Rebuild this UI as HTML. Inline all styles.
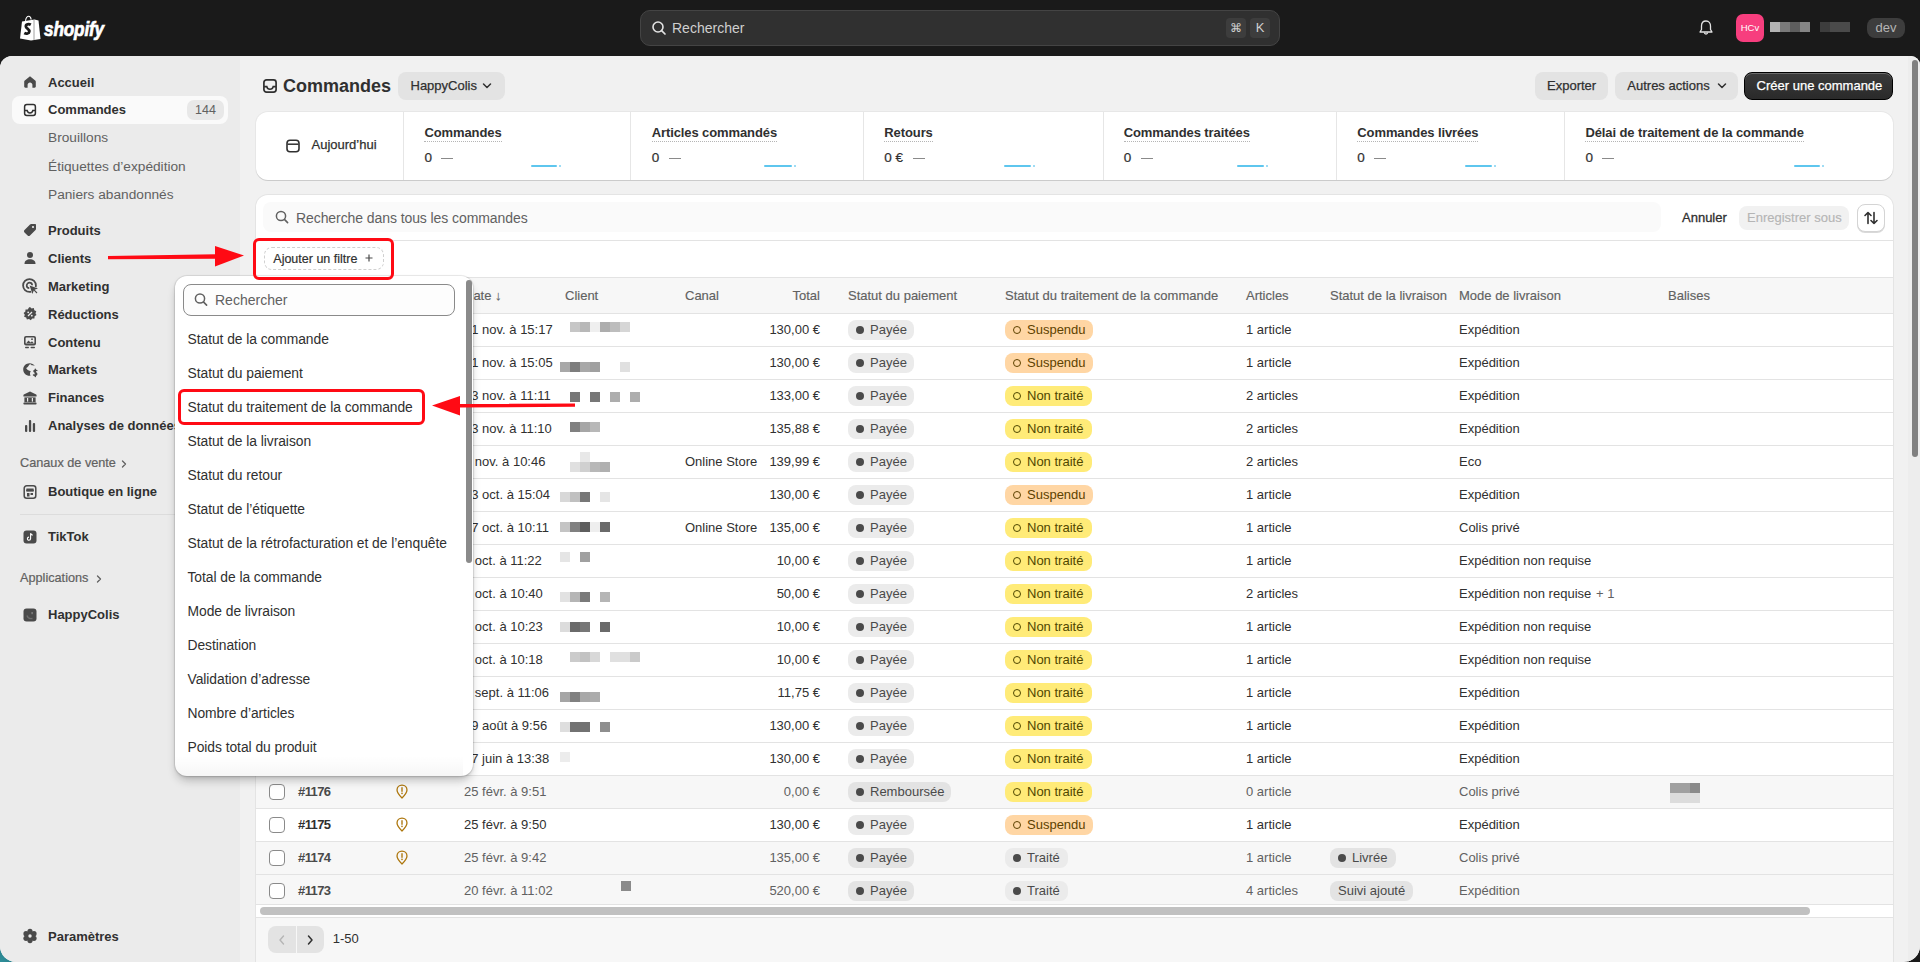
<!DOCTYPE html>
<html><head><meta charset="utf-8">
<style>
*{box-sizing:border-box;margin:0;padding:0}
html,body{width:1920px;height:962px;overflow:hidden;background:#1a1a1a;font-family:"Liberation Sans",sans-serif;color:#303030}
.abs{position:absolute}
#top{position:absolute;left:0;top:0;width:1920px;height:56px;background:#1a1a1a}
#frame{position:absolute;left:0;top:56px;width:1920px;height:906px;background:#f1f1f1;border-radius:12px 9px 16px 16px;overflow:hidden}
#teal{position:absolute;left:0;top:900px;width:60px;height:62px;background:radial-gradient(circle at 0 100%,#2f8f9a 0,#1f6b76 40%,#1a1a1a 100%)}
#side{position:absolute;left:0;top:0;width:240px;height:906px;background:#ebebeb}
.nav{position:absolute;left:48px;font-size:13px;font-weight:bold;color:#303030;white-space:nowrap;line-height:16px}
.sub{position:absolute;left:48px;font-size:13.7px;color:#616161;white-space:nowrap;line-height:16px}
.sec{position:absolute;left:20px;font-size:12.7px;color:#616161;white-space:nowrap;line-height:16px;-webkit-text-stroke:0.2px #616161}
.t{position:absolute;white-space:nowrap;line-height:20px}
.ico{position:absolute;left:22px;width:16px;height:16px}
</style></head><body>
<div id="top">
  <!-- logo -->
  <svg class="abs" style="left:19px;top:15px" width="23" height="26" viewBox="0 0 23 26">
    <path d="M3 6.5 L15.5 4.5 L19.5 5.5 L21.5 24 L12 25.5 L1 23.5 Z" fill="#fff"/>
    <path d="M6.5 5.8 C7 2.8 8.4 1.3 9.8 1.3 C11 1.3 11.8 2.4 12.2 4.6" stroke="#fff" stroke-width="1.1" fill="none"/>
    <line x1="15" y1="5" x2="15" y2="25" stroke="#888" stroke-width="0.8"/>
    <path d="M11.8 9.8 C9.8 8.6 6.6 9 6.9 11.6 C7.1 13.6 10.6 14 10.3 16.6 C10.1 18.6 7.4 19.2 5.3 18" stroke="#1a1a1a" stroke-width="2.8" fill="none"/>
  </svg>
  <div class="abs" style="left:44px;top:17.5px;font-size:20px;font-weight:bold;font-style:italic;color:#fff;transform:scaleX(0.86);transform-origin:0 0;letter-spacing:-0.2px;-webkit-text-stroke:0.7px #fff">shopify</div>
  <!-- search -->
  <div class="abs" style="left:640px;top:10px;width:640px;height:36px;background:#303030;border:1px solid #444;border-radius:10px"></div>
  <svg class="abs" style="left:651px;top:20px" width="16" height="16" viewBox="0 0 16 16"><circle cx="7" cy="7" r="5" stroke="#e3e3e3" stroke-width="1.6" fill="none"/><line x1="10.6" y1="10.6" x2="14" y2="14" stroke="#e3e3e3" stroke-width="1.7" stroke-linecap="round"/></svg>
  <div class="abs" style="left:672px;top:20px;font-size:14px;color:#cfcfcf;line-height:16px">Rechercher</div>
  <div class="abs" style="left:1226px;top:18px;width:20px;height:20px;background:#3d3d3d;border-radius:4px;color:#cfcfcf;font-size:12px;text-align:center;line-height:20px">&#8984;</div>
  <div class="abs" style="left:1250px;top:18px;width:20px;height:20px;background:#3d3d3d;border-radius:4px;color:#cfcfcf;font-size:13px;text-align:center;line-height:20px">K</div>
  <!-- right -->
  <svg class="abs" style="left:1698px;top:19px" width="16" height="18" viewBox="0 0 16 18"><path d="M8 2 C4.8 2 3.5 4.5 3.5 7 L3.5 10.5 L2 13 L14 13 L12.5 10.5 L12.5 7 C12.5 4.5 11.2 2 8 2 Z" stroke="#e3e3e3" stroke-width="1.3" fill="none" stroke-linejoin="round"/><path d="M6.3 13.5 C6.5 15.5 9.5 15.5 9.7 13.5" stroke="#e3e3e3" stroke-width="1.3" fill="none"/></svg>
  <div class="abs" style="left:1736px;top:14px;width:28px;height:28px;background:#f73e7e;border-radius:7px;color:#fff;font-size:9.5px;text-align:center;line-height:28px">HCv</div>
  <div class="abs" style="left:1770px;top:22px;width:10px;height:10px;background:#b3b3b3"></div>
  <div class="abs" style="left:1780px;top:22px;width:10px;height:10px;background:#7a7a7a"></div>
  <div class="abs" style="left:1790px;top:22px;width:10px;height:10px;background:#5e5e5e"></div>
  <div class="abs" style="left:1800px;top:22px;width:10px;height:10px;background:#858585"></div>
  <div class="abs" style="left:1820px;top:22px;width:10px;height:10px;background:#3d3d3d"></div>
  <div class="abs" style="left:1830px;top:22px;width:20px;height:10px;background:#4a4a4a"></div>
  <div class="abs" style="left:1867px;top:18px;width:38px;height:20px;background:#3d3d3d;border-radius:8px;color:#b5b5b5;font-size:13px;text-align:center;line-height:20px">dev</div>
</div>

<div id="teal"></div>
<div id="frame">
  <div id="side">
  </div>
  <div style="position:absolute;left:1908px;top:0;width:12px;height:906px;background:#ededed"></div>
  <!-- MAIN -->
</div>
<div id="content">
  <div class="abs" style="left:12px;top:96px;width:216px;height:28px;background:#fafafa;border-radius:8px"></div>
  <div class="abs" style="left:187px;top:100px;width:37px;height:20px;background:#e8e8e8;border-radius:7px;font-size:12.5px;color:#616161;text-align:center;line-height:20px">144</div>
  <div class="nav" style="top:75px">Accueil</div>
  <div class="nav" style="top:102px">Commandes</div>
  <div class="sub" style="top:130px">Brouillons</div>
  <div class="sub" style="top:158.5px">Étiquettes d’expédition</div>
  <div class="sub" style="top:186.5px">Paniers abandonnés</div>
  <div class="nav" style="top:222.5px">Produits</div>
  <div class="nav" style="top:250.5px">Clients</div>
  <div class="nav" style="top:278.7px">Marketing</div>
  <div class="nav" style="top:306.7px">Réductions</div>
  <div class="nav" style="top:334.5px">Contenu</div>
  <div class="nav" style="top:362.2px">Markets</div>
  <div class="nav" style="top:390.3px">Finances</div>
  <div class="nav" style="top:418.3px">Analyses de données</div>
  <div class="sec" style="top:455.3px">Canaux de vente</div>
  <svg class="abs" style="left:120px;top:458.5px" width="8" height="10" viewBox="0 0 8 10"><path d="M2.5 2 L5.5 5 L2.5 8" stroke="#616161" stroke-width="1.3" fill="none" stroke-linecap="round" stroke-linejoin="round"/></svg>
  <div class="nav" style="top:484.3px">Boutique en ligne</div>
  <div class="abs" style="left:20px;top:514px;width:200px;height:1px;background:#dcdcdc"></div>
  <div class="nav" style="top:529.2px">TikTok</div>
  <div class="sec" style="top:570.4px">Applications</div>
  <svg class="abs" style="left:95px;top:573.5px" width="8" height="10" viewBox="0 0 8 10"><path d="M2.5 2 L5.5 5 L2.5 8" stroke="#616161" stroke-width="1.3" fill="none" stroke-linecap="round" stroke-linejoin="round"/></svg>
  <div class="nav" style="top:607.3px">HappyColis</div>
  <div class="nav" style="top:928.8px">Paramètres</div>

  <svg class="abs" style="left:22px;top:74px" width="16" height="16" viewBox="0 0 16 16"><path d="M8 2.2 L2.8 6.6 C2.3 7 2.2 7.3 2.2 8 L2.2 12.6 C2.2 13.3 2.7 13.8 3.4 13.8 L5.6 13.8 L5.6 10.8 C5.6 9.5 6.7 8.5 8 8.5 C9.3 8.5 10.4 9.5 10.4 10.8 L10.4 13.8 L12.6 13.8 C13.3 13.8 13.8 13.3 13.8 12.6 L13.8 8 C13.8 7.3 13.7 7 13.2 6.6 Z" fill="#4a4a4a"/></svg>
  <svg class="abs" style="left:22px;top:102px" width="16" height="16" viewBox="0 0 16 16"><rect x="2.6" y="2.6" width="10.8" height="10.8" rx="2.2" stroke="#303030" stroke-width="1.5" fill="none"/><path d="M2.8 8.6 L5.2 8.6 C5.6 10.2 6.6 11 8 11 C9.4 11 10.4 10.2 10.8 8.6 L13.2 8.6" stroke="#303030" stroke-width="1.5" fill="none"/></svg>
  <svg class="abs" style="left:22px;top:222px" width="16" height="16" viewBox="0 0 16 16"><path d="M9.2 2 L13 2 C13.6 2 14 2.4 14 3 L14 6.8 C14 7.3 13.8 7.7 13.5 8 L8 13.5 C7.3 14.2 6.3 14.2 5.6 13.5 L2.5 10.4 C1.8 9.7 1.8 8.7 2.5 8 L8 2.5 C8.3 2.2 8.7 2 9.2 2 Z" fill="#4a4a4a"/><circle cx="11" cy="5" r="1.1" fill="#ebebeb"/></svg>
  <svg class="abs" style="left:22px;top:250px" width="16" height="16" viewBox="0 0 16 16"><circle cx="8" cy="5" r="3" fill="#4a4a4a"/><path d="M2.5 14 C2.5 10.8 4.8 9.3 8 9.3 C11.2 9.3 13.5 10.8 13.5 14 Z" fill="#4a4a4a"/></svg>
  <svg class="abs" style="left:22px;top:278px" width="17" height="17" viewBox="0 0 17 17"><path d="M13.6 9.2 C13.8 8.7 13.9 8.1 13.9 7.5 C13.9 4 11 1.1 7.5 1.1 C4 1.1 1.1 4 1.1 7.5 C1.1 11 4 13.9 7.5 13.9 C8.1 13.9 8.7 13.8 9.2 13.6" stroke="#4a4a4a" stroke-width="1.8" fill="none"/><path d="M10.2 7.3 C10.1 5.8 8.9 4.7 7.5 4.7 C6 4.7 4.7 6 4.7 7.5 C4.7 8.9 5.8 10.1 7.3 10.2" stroke="#4a4a4a" stroke-width="1.7" fill="none"/><path d="M7.6 7.6 L16 10.4 L12.6 11.8 L15.4 14.6 L14.6 15.4 L11.8 12.6 L10.4 16 Z" fill="#4a4a4a"/></svg>
  <svg class="abs" style="left:22px;top:306px" width="16" height="16" viewBox="0 0 16 16"><path d="M8 1 L9.6 2.4 L11.8 2.1 L12.3 4.2 L14.3 5.2 L13.5 7.2 L14.5 9.1 L12.6 10.3 L12.4 12.5 L10.2 12.4 L8.8 14.2 L7 12.9 L4.9 13.6 L4.2 11.5 L2.1 10.8 L2.8 8.7 L1.6 6.9 L3.4 5.6 L3.5 3.4 L5.7 3.4 L7 1.6 Z" fill="#4a4a4a"/><path d="M6 10 L10 6" stroke="#ebebeb" stroke-width="1.3"/><circle cx="6.2" cy="6.3" r="0.9" fill="#ebebeb"/><circle cx="9.8" cy="9.7" r="0.9" fill="#ebebeb"/></svg>
  <svg class="abs" style="left:22px;top:334px" width="16" height="16" viewBox="0 0 16 16"><rect x="2" y="2" width="12" height="9.5" rx="2" fill="#4a4a4a"/><rect x="3.6" y="3.6" width="8.8" height="6.2" rx="0.8" fill="#ebebeb"/><path d="M4 9.5 L6.5 6.5 L8.5 8.5 L10 7.2 L12 9.5 Z" fill="#4a4a4a"/><circle cx="10" cy="5.2" r="0.9" fill="#4a4a4a"/><rect x="3" y="12.8" width="4" height="1.4" rx="0.7" fill="#4a4a4a"/><rect x="8.5" y="12.8" width="4.5" height="1.4" rx="0.7" fill="#4a4a4a"/></svg>
  <svg class="abs" style="left:22px;top:362px" width="17" height="17" viewBox="0 0 17 17"><path d="M7.5 1.2 C4 1.2 1.2 4 1.2 7.5 C1.2 11 4 13.8 7.5 13.8 C7.9 13.8 8.3 13.8 8.6 13.7 C8.2 13 8 12.3 8 11.5 C8 10.6 8.3 9.8 8.8 9.2 L6.8 8.6 C5.6 8.2 4.6 7.3 4.2 6.1 C5.4 5.3 6.6 4.2 7.2 2.8 C7.4 2.2 8.4 2 9 2.5 L9.6 3.3 C10.7 3.1 11.8 3.2 12.8 3.8 C11.6 2.2 9.7 1.2 7.5 1.2 Z" fill="#4a4a4a"/><path d="M14.8 8.6 C14.2 8 12.2 7.8 11.9 9 C11.6 10.4 14.8 10.3 14.8 12.1 C14.8 13.6 12.6 13.8 11.5 12.9 M13.3 7.2 L13.3 14.6" stroke="#4a4a4a" stroke-width="1.4" fill="none" stroke-linecap="round"/></svg>
  <svg class="abs" style="left:22px;top:390px" width="16" height="16" viewBox="0 0 16 16"><path d="M8 1.5 L14.2 4.6 C14.6 4.8 14.6 5.4 14.6 5.8 L14.6 6.6 L1.4 6.6 L1.4 5.8 C1.4 5.4 1.4 4.8 1.8 4.6 Z" fill="#4a4a4a"/><rect x="2.4" y="7.4" width="11.2" height="4.8" fill="#4a4a4a"/><rect x="5" y="8" width="1.2" height="3.6" fill="#ebebeb"/><rect x="9.8" y="8" width="1.2" height="3.6" fill="#ebebeb"/><rect x="1.4" y="12.6" width="13.2" height="2" rx="0.8" fill="#4a4a4a"/></svg>
  <svg class="abs" style="left:22px;top:418px" width="16" height="16" viewBox="0 0 16 16"><rect x="3" y="7" width="2.3" height="7" rx="1" fill="#4a4a4a"/><rect x="6.9" y="2" width="2.3" height="12" rx="1" fill="#4a4a4a"/><rect x="10.8" y="5" width="2.3" height="9" rx="1" fill="#4a4a4a"/></svg>
  <svg class="abs" style="left:22px;top:484px" width="16" height="16" viewBox="0 0 16 16"><rect x="2.2" y="1.8" width="11.6" height="12.4" rx="2.5" stroke="#4a4a4a" stroke-width="1.5" fill="none"/><path d="M4.5 4.5 L11.5 4.5 L12 7 C11.5 8 10.5 8 10 7.2 C9.5 8 8.5 8 8 7.2 C7.5 8 6.5 8 6 7.2 C5.5 8 4.5 8 4 7 Z" fill="#4a4a4a"/><rect x="5" y="9" width="2.5" height="3.5" fill="#4a4a4a"/><rect x="8.5" y="9" width="2.5" height="2" fill="#4a4a4a"/></svg>
  <svg class="abs" style="left:22px;top:529px" width="16" height="16" viewBox="0 0 16 16"><rect x="1.5" y="1.5" width="13" height="13" rx="3" fill="#4a4a4a"/><path d="M8.6 4.2 L8.6 9.6 C8.6 10.6 7.9 11.3 7 11.3 C6.1 11.3 5.4 10.6 5.4 9.7 C5.4 8.8 6.1 8.1 7 8.1 M8.6 4.2 C8.8 5.3 9.6 6 10.7 6.1" stroke="#fff" stroke-width="1.1" fill="none"/></svg>
  <svg class="abs" style="left:22px;top:607px" width="16" height="16" viewBox="0 0 16 16"><rect x="1.5" y="1.5" width="13" height="13" rx="3" fill="#4a4a4a"/><path d="M5 8.5 C5.5 11 8 12 10.5 11.5" stroke="#6e6e6e" stroke-width="1.3" fill="none"/><rect x="9.5" y="5" width="1.2" height="2.2" fill="#8a8a8a"/></svg>
  <svg class="abs" style="left:22px;top:928px" width="16" height="16" viewBox="0 0 16 16"><circle cx="8" cy="8" r="4.8" fill="#4a4a4a"/><circle cx="8.00" cy="3.40" r="2.6" fill="#4a4a4a"/><circle cx="11.98" cy="5.70" r="2.6" fill="#4a4a4a"/><circle cx="11.98" cy="10.30" r="2.6" fill="#4a4a4a"/><circle cx="8.00" cy="12.60" r="2.6" fill="#4a4a4a"/><circle cx="4.02" cy="10.30" r="2.6" fill="#4a4a4a"/><circle cx="4.02" cy="5.70" r="2.6" fill="#4a4a4a"/><circle cx="8" cy="8" r="1.7" fill="#ebebeb"/></svg>

<!-- CONTENT -->
<svg class="abs" style="left:263px;top:79px" width="14" height="14" viewBox="0 0 14 14"><rect x="0.9" y="0.9" width="12.2" height="12.2" rx="2.6" stroke="#303030" stroke-width="1.7" fill="none"/><path d="M1 7.6 L3.8 7.6 C4.2 9.4 5.4 10.3 7 10.3 C8.6 10.3 9.8 9.4 10.2 7.6 L13 7.6" stroke="#303030" stroke-width="1.6" fill="none"/></svg>
<div class="t" style="left:283px;top:76.16px;font-size:18px;color:#303030;font-weight:bold;">Commandes</div>
<div class="abs" style="left:398px;top:72px;width:107px;height:28px;background:#e3e3e3;border-radius:8px"></div>
<div class="t" style="left:410.5px;top:75.50px;font-size:13px;color:#303030;font-weight:normal;-webkit-text-stroke:0.25px #303030;">HappyColis</div>
<svg class="abs" style="left:482px;top:82px" width="10" height="8" viewBox="0 0 10 8"><path d="M1.5 2 L5 5.5 L8.5 2" stroke="#303030" stroke-width="1.5" fill="none" stroke-linecap="round" stroke-linejoin="round"/></svg>
<div class="abs" style="left:1535px;top:72px;width:73px;height:28px;background:#e3e3e3;border-radius:8px"></div>
<div class="t" style="left:1547px;top:75.50px;font-size:13px;color:#303030;font-weight:normal;-webkit-text-stroke:0.25px #303030;">Exporter</div>
<div class="abs" style="left:1615px;top:72px;width:123px;height:28px;background:#e3e3e3;border-radius:8px"></div>
<div class="t" style="left:1627.3px;top:75.50px;font-size:13px;color:#303030;font-weight:normal;-webkit-text-stroke:0.25px #303030;">Autres actions</div>
<svg class="abs" style="left:1717px;top:82px" width="10" height="8" viewBox="0 0 10 8"><path d="M1.5 2 L5 5.5 L8.5 2" stroke="#303030" stroke-width="1.5" fill="none" stroke-linecap="round" stroke-linejoin="round"/></svg>
<div class="abs" style="left:1744px;top:72px;width:149px;height:28px;background:linear-gradient(#3a3a3a,#2a2a2a);border:1px solid #000;border-radius:8px;box-shadow:inset 0 1px 0 rgba(255,255,255,0.25)"></div>
<div class="t" style="left:1756.6px;top:75.50px;font-size:13px;color:#ffffff;font-weight:normal;-webkit-text-stroke:0.25px #ffffff;">Créer une commande</div>
<div class="abs" style="left:256px;top:112px;width:1637px;height:68px;background:#fff;border-radius:12px;box-shadow:0 1px 0 rgba(0,0,0,0.12),0 0 0 1px rgba(0,0,0,0.04)"></div>
<div class="abs" style="left:403px;top:112px;width:1px;height:68px;background:#e6e6e6"></div>
<div class="abs" style="left:630px;top:112px;width:1px;height:68px;background:#e6e6e6"></div>
<div class="abs" style="left:863px;top:112px;width:1px;height:68px;background:#e6e6e6"></div>
<div class="abs" style="left:1103px;top:112px;width:1px;height:68px;background:#e6e6e6"></div>
<div class="abs" style="left:1336px;top:112px;width:1px;height:68px;background:#e6e6e6"></div>
<div class="abs" style="left:1564px;top:112px;width:1px;height:68px;background:#e6e6e6"></div>
<svg class="abs" style="left:286px;top:139px" width="14" height="14" viewBox="0 0 14 14"><rect x="1" y="1.2" width="12" height="11.6" rx="3" stroke="#303030" stroke-width="1.6" fill="none"/><line x1="1.5" y1="5.2" x2="12.5" y2="5.2" stroke="#303030" stroke-width="1.5"/></svg>
<div class="t" style="left:311.5px;top:135.30px;font-size:13px;color:#303030;font-weight:normal;-webkit-text-stroke:0.25px #303030;">Aujourd’hui</div>
<div class="t" style="left:424.4px;top:123.20px;font-size:13px;color:#303030;font-weight:bold;letter-spacing:-0.1px"><span style="border-bottom:1.5px dotted #b5b5b5;padding-bottom:1px">Commandes</span></div>
<div class="t" style="left:424.4px;top:148.02px;font-size:13.5px;color:#303030;font-weight:normal;-webkit-text-stroke:0.2px #303030;">0</div>
<div class="abs" style="left:441.4px;top:157.5px;width:12px;height:1.6px;background:#8a8a8a"></div>
<div class="abs" style="left:531px;top:164.8px;width:26px;height:2px;background:#5ec6ee;border-radius:1px"></div>
<div class="abs" style="left:559px;top:164.8px;width:1.5px;height:2px;background:#9fdcf4"></div>
<div class="t" style="left:651.7px;top:123.20px;font-size:13px;color:#303030;font-weight:bold;letter-spacing:-0.1px"><span style="border-bottom:1.5px dotted #b5b5b5;padding-bottom:1px">Articles commandés</span></div>
<div class="t" style="left:651.7px;top:148.02px;font-size:13.5px;color:#303030;font-weight:normal;-webkit-text-stroke:0.2px #303030;">0</div>
<div class="abs" style="left:668.7px;top:157.5px;width:12px;height:1.6px;background:#8a8a8a"></div>
<div class="abs" style="left:764px;top:164.8px;width:28px;height:2px;background:#5ec6ee;border-radius:1px"></div>
<div class="abs" style="left:794px;top:164.8px;width:1.5px;height:2px;background:#9fdcf4"></div>
<div class="t" style="left:884.3px;top:123.20px;font-size:13px;color:#303030;font-weight:bold;letter-spacing:-0.1px"><span style="border-bottom:1.5px dotted #b5b5b5;padding-bottom:1px">Retours</span></div>
<div class="t" style="left:884.3px;top:148.02px;font-size:13.5px;color:#303030;font-weight:normal;-webkit-text-stroke:0.2px #303030;">0 €</div>
<div class="abs" style="left:913.3px;top:157.5px;width:12px;height:1.6px;background:#8a8a8a"></div>
<div class="abs" style="left:1004px;top:164.8px;width:27px;height:2px;background:#5ec6ee;border-radius:1px"></div>
<div class="abs" style="left:1033px;top:164.8px;width:1.5px;height:2px;background:#9fdcf4"></div>
<div class="t" style="left:1123.7px;top:123.20px;font-size:13px;color:#303030;font-weight:bold;letter-spacing:-0.1px"><span style="border-bottom:1.5px dotted #b5b5b5;padding-bottom:1px">Commandes traitées</span></div>
<div class="t" style="left:1123.7px;top:148.02px;font-size:13.5px;color:#303030;font-weight:normal;-webkit-text-stroke:0.2px #303030;">0</div>
<div class="abs" style="left:1140.7px;top:157.5px;width:12px;height:1.6px;background:#8a8a8a"></div>
<div class="abs" style="left:1237px;top:164.8px;width:27px;height:2px;background:#5ec6ee;border-radius:1px"></div>
<div class="abs" style="left:1266px;top:164.8px;width:1.5px;height:2px;background:#9fdcf4"></div>
<div class="t" style="left:1357.3px;top:123.20px;font-size:13px;color:#303030;font-weight:bold;letter-spacing:-0.1px"><span style="border-bottom:1.5px dotted #b5b5b5;padding-bottom:1px">Commandes livrées</span></div>
<div class="t" style="left:1357.3px;top:148.02px;font-size:13.5px;color:#303030;font-weight:normal;-webkit-text-stroke:0.2px #303030;">0</div>
<div class="abs" style="left:1374.3px;top:157.5px;width:12px;height:1.6px;background:#8a8a8a"></div>
<div class="abs" style="left:1465px;top:164.8px;width:27px;height:2px;background:#5ec6ee;border-radius:1px"></div>
<div class="abs" style="left:1494px;top:164.8px;width:1.5px;height:2px;background:#9fdcf4"></div>
<div class="t" style="left:1585.4px;top:123.20px;font-size:13px;color:#303030;font-weight:bold;letter-spacing:-0.1px"><span style="border-bottom:1.5px dotted #b5b5b5;padding-bottom:1px">Délai de traitement de la commande</span></div>
<div class="t" style="left:1585.4px;top:148.02px;font-size:13.5px;color:#303030;font-weight:normal;-webkit-text-stroke:0.2px #303030;">0</div>
<div class="abs" style="left:1602.4px;top:157.5px;width:12px;height:1.6px;background:#8a8a8a"></div>
<div class="abs" style="left:1794px;top:164.8px;width:26px;height:2px;background:#5ec6ee;border-radius:1px"></div>
<div class="abs" style="left:1822px;top:164.8px;width:1.5px;height:2px;background:#9fdcf4"></div>
<div class="abs" style="left:256px;top:195px;width:1637px;height:723px;background:#fff;border-radius:12px 12px 0 0;box-shadow:0 0 0 1px rgba(0,0,0,0.05)"></div>
<div class="abs" style="left:255px;top:918px;width:1639px;height:44px;background:#f7f7f7;border-left:1px solid #e3e3e3;border-right:1px solid #e3e3e3"></div>
<div class="abs" style="left:263px;top:202px;width:1398px;height:30px;background:#fafafa;border-radius:8px"></div>
<svg class="abs" style="left:275px;top:210px" width="14" height="14" viewBox="0 0 14 14"><circle cx="6" cy="6" r="4.6" stroke="#616161" stroke-width="1.5" fill="none"/><line x1="9.4" y1="9.4" x2="12.6" y2="12.6" stroke="#616161" stroke-width="1.6" stroke-linecap="round"/></svg>
<div class="t" style="left:296px;top:208.45px;font-size:14px;color:#616161;font-weight:normal;letter-spacing:-0.08px">Recherche dans tous les commandes</div>
<div class="t" style="left:1682px;top:208.30px;font-size:13px;color:#303030;font-weight:normal;-webkit-text-stroke:0.3px #303030;">Annuler</div>
<div class="abs" style="left:1739px;top:206px;width:110px;height:24px;background:#f1f1f1;border-radius:8px"></div>
<div class="t" style="left:1747px;top:208.30px;font-size:13px;color:#b5b5b5;font-weight:normal;-webkit-text-stroke:0.15px #b5b5b5;">Enregistrer sous</div>
<div class="abs" style="left:1857px;top:204px;width:28px;height:28px;background:#fff;border:1px solid #d4d4d4;border-radius:8px;box-shadow:0 1px 0 rgba(0,0,0,0.15)"></div>
<svg class="abs" style="left:1863px;top:210px" width="16" height="16" viewBox="0 0 16 16"><path d="M5 13.5 L5 2.5 M2 5.5 L5 2.5 L8 5.5" stroke="#303030" stroke-width="1.6" fill="none" stroke-linecap="round" stroke-linejoin="round"/><path d="M11 2.5 L11 13.5 M8 10.5 L11 13.5 L14 10.5" stroke="#303030" stroke-width="1.6" fill="none" stroke-linecap="round" stroke-linejoin="round"/></svg>
<div class="abs" style="left:256px;top:240px;width:1637px;height:1px;background:#e3e3e3"></div>
<div class="abs" style="left:264px;top:247px;width:120px;height:23px;border:1px dashed #d0d0d0;border-radius:8px"></div>
<div class="t" style="left:273.3px;top:248.97px;font-size:12.5px;color:#303030;font-weight:normal;-webkit-text-stroke:0.2px #303030;">Ajouter un filtre</div>
<svg class="abs" style="left:364px;top:253px" width="10" height="10" viewBox="0 0 10 10"><path d="M5 1.5 L5 8.5 M1.5 5 L8.5 5" stroke="#4a4a4a" stroke-width="1.2"/></svg>
<div class="abs" style="left:256px;top:277px;width:1637px;height:37px;background:#f7f7f7;border-top:1px solid #e3e3e3;border-bottom:1px solid #e3e3e3"></div>
<div class="t" style="left:464px;top:286.00px;font-size:13px;color:#616161;font-weight:normal;-webkit-text-stroke:0.15px #616161;">Date ↓</div>
<div class="t" style="left:565px;top:286.00px;font-size:13px;color:#616161;font-weight:normal;-webkit-text-stroke:0.15px #616161;">Client</div>
<div class="t" style="left:685px;top:286.00px;font-size:13px;color:#616161;font-weight:normal;-webkit-text-stroke:0.15px #616161;">Canal</div>
<div class="t" style="left:520px;width:300px;text-align:right;top:286.00px;font-size:13px;color:#616161;font-weight:normal;-webkit-text-stroke:0.15px #616161;">Total</div>
<div class="t" style="left:848px;top:286.00px;font-size:13px;color:#616161;font-weight:normal;-webkit-text-stroke:0.15px #616161;">Statut du paiement</div>
<div class="t" style="left:1005px;top:286.00px;font-size:13px;color:#616161;font-weight:normal;-webkit-text-stroke:0.15px #616161;">Statut du traitement de la commande</div>
<div class="t" style="left:1246px;top:286.00px;font-size:13px;color:#616161;font-weight:normal;-webkit-text-stroke:0.15px #616161;">Articles</div>
<div class="t" style="left:1330px;top:286.00px;font-size:13px;color:#616161;font-weight:normal;-webkit-text-stroke:0.15px #616161;">Statut de la livraison</div>
<div class="t" style="left:1459px;top:286.00px;font-size:13px;color:#616161;font-weight:normal;-webkit-text-stroke:0.15px #616161;">Mode de livraison</div>
<div class="t" style="left:1668px;top:286.00px;font-size:13px;color:#616161;font-weight:normal;-webkit-text-stroke:0.15px #616161;">Balises</div>
<div class="abs" style="left:256px;top:314px;width:1637px;height:33px;background:#ffffff;border-bottom:1px solid #e3e3e3"></div>
<div class="abs" style="left:269px;top:322px;width:16px;height:16px;background:#fff;border:1px solid #8a8a8a;border-radius:4px"></div>
<div class="t" style="left:298px;top:320.30px;font-size:13px;color:#303030;font-weight:bold;letter-spacing:-0.6px">#1190</div>
<div class="t" style="left:464px;top:320.30px;font-size:13px;color:#303030;font-weight:normal;">21 nov. à 15:17</div>
<div class="abs" style="left:570px;top:322px;width:10px;height:10px;background:#c6c6c6"></div>
<div class="abs" style="left:580px;top:322px;width:10px;height:10px;background:#b8b8b8"></div>
<div class="abs" style="left:590px;top:322px;width:10px;height:10px;background:#efefef"></div>
<div class="abs" style="left:600px;top:322px;width:10px;height:10px;background:#adadad"></div>
<div class="abs" style="left:610px;top:322px;width:10px;height:10px;background:#bdbdbd"></div>
<div class="abs" style="left:620px;top:322px;width:10px;height:10px;background:#d6d6d6"></div>
<div class="t" style="left:520px;width:300px;text-align:right;top:320.30px;font-size:13px;color:#303030;font-weight:normal;">130,00 €</div>
<div class="abs" style="left:848px;top:320px;width:66px;height:20px;background:#ebebeb;border-radius:8px"></div>
<div class="abs" style="left:856px;top:326px;width:8px;height:8px;background:#4a4a4a;border-radius:50%"></div>
<div class="t" style="left:870px;top:320.30px;font-size:13px;color:#4a4a4a;font-weight:normal;">Payée</div>
<div class="abs" style="left:1005px;top:320px;width:88px;height:20px;background:#ffd6a4;border-radius:8px"></div>
<div class="abs" style="left:1013px;top:326px;width:8px;height:8px;border:1.5px solid #5e4200;border-radius:50%"></div>
<div class="t" style="left:1027px;top:320.30px;font-size:13px;color:#5e4200;font-weight:normal;">Suspendu</div>
<div class="t" style="left:1246px;top:320.30px;font-size:13px;color:#303030;font-weight:normal;">1 article</div>
<div class="t" style="left:1459px;top:320.30px;font-size:13px;color:#303030;font-weight:normal;">Expédition</div>
<div class="abs" style="left:256px;top:347px;width:1637px;height:33px;background:#ffffff;border-bottom:1px solid #e3e3e3"></div>
<div class="abs" style="left:269px;top:355px;width:16px;height:16px;background:#fff;border:1px solid #8a8a8a;border-radius:4px"></div>
<div class="t" style="left:298px;top:353.30px;font-size:13px;color:#303030;font-weight:bold;letter-spacing:-0.6px">#1189</div>
<div class="t" style="left:464px;top:353.30px;font-size:13px;color:#303030;font-weight:normal;">21 nov. à 15:05</div>
<div class="abs" style="left:560px;top:362px;width:10px;height:10px;background:#a8a8a8"></div>
<div class="abs" style="left:570px;top:362px;width:10px;height:10px;background:#7d7d7d"></div>
<div class="abs" style="left:580px;top:362px;width:10px;height:10px;background:#a8a8a8"></div>
<div class="abs" style="left:590px;top:362px;width:10px;height:10px;background:#a0a0a0"></div>
<div class="abs" style="left:620px;top:362px;width:10px;height:10px;background:#e0e0e0"></div>
<div class="t" style="left:520px;width:300px;text-align:right;top:353.30px;font-size:13px;color:#303030;font-weight:normal;">130,00 €</div>
<div class="abs" style="left:848px;top:353px;width:66px;height:20px;background:#ebebeb;border-radius:8px"></div>
<div class="abs" style="left:856px;top:359px;width:8px;height:8px;background:#4a4a4a;border-radius:50%"></div>
<div class="t" style="left:870px;top:353.30px;font-size:13px;color:#4a4a4a;font-weight:normal;">Payée</div>
<div class="abs" style="left:1005px;top:353px;width:88px;height:20px;background:#ffd6a4;border-radius:8px"></div>
<div class="abs" style="left:1013px;top:359px;width:8px;height:8px;border:1.5px solid #5e4200;border-radius:50%"></div>
<div class="t" style="left:1027px;top:353.30px;font-size:13px;color:#5e4200;font-weight:normal;">Suspendu</div>
<div class="t" style="left:1246px;top:353.30px;font-size:13px;color:#303030;font-weight:normal;">1 article</div>
<div class="t" style="left:1459px;top:353.30px;font-size:13px;color:#303030;font-weight:normal;">Expédition</div>
<div class="abs" style="left:256px;top:380px;width:1637px;height:33px;background:#ffffff;border-bottom:1px solid #e3e3e3"></div>
<div class="abs" style="left:269px;top:388px;width:16px;height:16px;background:#fff;border:1px solid #8a8a8a;border-radius:4px"></div>
<div class="t" style="left:298px;top:386.30px;font-size:13px;color:#303030;font-weight:bold;letter-spacing:-0.6px">#1188</div>
<div class="t" style="left:464px;top:386.30px;font-size:13px;color:#303030;font-weight:normal;">13 nov. à 11:11</div>
<div class="abs" style="left:570px;top:392px;width:10px;height:10px;background:#777777"></div>
<div class="abs" style="left:590px;top:392px;width:10px;height:10px;background:#777777"></div>
<div class="abs" style="left:610px;top:392px;width:10px;height:10px;background:#adadad"></div>
<div class="abs" style="left:630px;top:392px;width:10px;height:10px;background:#adadad"></div>
<div class="t" style="left:520px;width:300px;text-align:right;top:386.30px;font-size:13px;color:#303030;font-weight:normal;">133,00 €</div>
<div class="abs" style="left:848px;top:386px;width:66px;height:20px;background:#ebebeb;border-radius:8px"></div>
<div class="abs" style="left:856px;top:392px;width:8px;height:8px;background:#4a4a4a;border-radius:50%"></div>
<div class="t" style="left:870px;top:386.30px;font-size:13px;color:#4a4a4a;font-weight:normal;">Payée</div>
<div class="abs" style="left:1005px;top:386px;width:87px;height:20px;background:#ffeb78;border-radius:8px"></div>
<div class="abs" style="left:1013px;top:392px;width:8px;height:8px;border:1.5px solid #4f4700;border-radius:50%"></div>
<div class="t" style="left:1027px;top:386.30px;font-size:13px;color:#4f4700;font-weight:normal;">Non traité</div>
<div class="t" style="left:1246px;top:386.30px;font-size:13px;color:#303030;font-weight:normal;">2 articles</div>
<div class="t" style="left:1459px;top:386.30px;font-size:13px;color:#303030;font-weight:normal;">Expédition</div>
<div class="abs" style="left:256px;top:413px;width:1637px;height:33px;background:#ffffff;border-bottom:1px solid #e3e3e3"></div>
<div class="abs" style="left:269px;top:421px;width:16px;height:16px;background:#fff;border:1px solid #8a8a8a;border-radius:4px"></div>
<div class="t" style="left:298px;top:419.30px;font-size:13px;color:#303030;font-weight:bold;letter-spacing:-0.6px">#1187</div>
<div class="t" style="left:464px;top:419.30px;font-size:13px;color:#303030;font-weight:normal;">13 nov. à 11:10</div>
<div class="abs" style="left:570px;top:422px;width:10px;height:10px;background:#808080"></div>
<div class="abs" style="left:580px;top:422px;width:10px;height:10px;background:#a6a6a6"></div>
<div class="abs" style="left:590px;top:422px;width:10px;height:10px;background:#b8b8b8"></div>
<div class="t" style="left:520px;width:300px;text-align:right;top:419.30px;font-size:13px;color:#303030;font-weight:normal;">135,88 €</div>
<div class="abs" style="left:848px;top:419px;width:66px;height:20px;background:#ebebeb;border-radius:8px"></div>
<div class="abs" style="left:856px;top:425px;width:8px;height:8px;background:#4a4a4a;border-radius:50%"></div>
<div class="t" style="left:870px;top:419.30px;font-size:13px;color:#4a4a4a;font-weight:normal;">Payée</div>
<div class="abs" style="left:1005px;top:419px;width:87px;height:20px;background:#ffeb78;border-radius:8px"></div>
<div class="abs" style="left:1013px;top:425px;width:8px;height:8px;border:1.5px solid #4f4700;border-radius:50%"></div>
<div class="t" style="left:1027px;top:419.30px;font-size:13px;color:#4f4700;font-weight:normal;">Non traité</div>
<div class="t" style="left:1246px;top:419.30px;font-size:13px;color:#303030;font-weight:normal;">2 articles</div>
<div class="t" style="left:1459px;top:419.30px;font-size:13px;color:#303030;font-weight:normal;">Expédition</div>
<div class="abs" style="left:256px;top:446px;width:1637px;height:33px;background:#ffffff;border-bottom:1px solid #e3e3e3"></div>
<div class="abs" style="left:269px;top:454px;width:16px;height:16px;background:#fff;border:1px solid #8a8a8a;border-radius:4px"></div>
<div class="t" style="left:298px;top:452.30px;font-size:13px;color:#303030;font-weight:bold;letter-spacing:-0.6px">#1186</div>
<div class="t" style="left:464px;top:452.30px;font-size:13px;color:#303030;font-weight:normal;">6 nov. à 10:46</div>
<div class="abs" style="left:580px;top:452px;width:10px;height:10px;background:#e8e8e8"></div>
<div class="abs" style="left:570px;top:462px;width:10px;height:10px;background:#e0e0e0"></div>
<div class="abs" style="left:580px;top:462px;width:10px;height:10px;background:#d0d0d0"></div>
<div class="abs" style="left:590px;top:462px;width:10px;height:10px;background:#b8b8b8"></div>
<div class="abs" style="left:600px;top:462px;width:10px;height:10px;background:#b0b0b0"></div>
<div class="t" style="left:685px;top:452.30px;font-size:13px;color:#303030;font-weight:normal;">Online Store</div>
<div class="t" style="left:520px;width:300px;text-align:right;top:452.30px;font-size:13px;color:#303030;font-weight:normal;">139,99 €</div>
<div class="abs" style="left:848px;top:452px;width:66px;height:20px;background:#ebebeb;border-radius:8px"></div>
<div class="abs" style="left:856px;top:458px;width:8px;height:8px;background:#4a4a4a;border-radius:50%"></div>
<div class="t" style="left:870px;top:452.30px;font-size:13px;color:#4a4a4a;font-weight:normal;">Payée</div>
<div class="abs" style="left:1005px;top:452px;width:87px;height:20px;background:#ffeb78;border-radius:8px"></div>
<div class="abs" style="left:1013px;top:458px;width:8px;height:8px;border:1.5px solid #4f4700;border-radius:50%"></div>
<div class="t" style="left:1027px;top:452.30px;font-size:13px;color:#4f4700;font-weight:normal;">Non traité</div>
<div class="t" style="left:1246px;top:452.30px;font-size:13px;color:#303030;font-weight:normal;">2 articles</div>
<div class="t" style="left:1459px;top:452.30px;font-size:13px;color:#303030;font-weight:normal;">Eco</div>
<div class="abs" style="left:256px;top:479px;width:1637px;height:33px;background:#ffffff;border-bottom:1px solid #e3e3e3"></div>
<div class="abs" style="left:269px;top:487px;width:16px;height:16px;background:#fff;border:1px solid #8a8a8a;border-radius:4px"></div>
<div class="t" style="left:298px;top:485.30px;font-size:13px;color:#303030;font-weight:bold;letter-spacing:-0.6px">#1185</div>
<div class="t" style="left:464px;top:485.30px;font-size:13px;color:#303030;font-weight:normal;">23 oct. à 15:04</div>
<div class="abs" style="left:560px;top:492px;width:10px;height:10px;background:#d8d8d8"></div>
<div class="abs" style="left:570px;top:492px;width:10px;height:10px;background:#c0c0c0"></div>
<div class="abs" style="left:580px;top:492px;width:10px;height:10px;background:#777777"></div>
<div class="abs" style="left:600px;top:492px;width:10px;height:10px;background:#e5e5e5"></div>
<div class="t" style="left:520px;width:300px;text-align:right;top:485.30px;font-size:13px;color:#303030;font-weight:normal;">130,00 €</div>
<div class="abs" style="left:848px;top:485px;width:66px;height:20px;background:#ebebeb;border-radius:8px"></div>
<div class="abs" style="left:856px;top:491px;width:8px;height:8px;background:#4a4a4a;border-radius:50%"></div>
<div class="t" style="left:870px;top:485.30px;font-size:13px;color:#4a4a4a;font-weight:normal;">Payée</div>
<div class="abs" style="left:1005px;top:485px;width:88px;height:20px;background:#ffd6a4;border-radius:8px"></div>
<div class="abs" style="left:1013px;top:491px;width:8px;height:8px;border:1.5px solid #5e4200;border-radius:50%"></div>
<div class="t" style="left:1027px;top:485.30px;font-size:13px;color:#5e4200;font-weight:normal;">Suspendu</div>
<div class="t" style="left:1246px;top:485.30px;font-size:13px;color:#303030;font-weight:normal;">1 article</div>
<div class="t" style="left:1459px;top:485.30px;font-size:13px;color:#303030;font-weight:normal;">Expédition</div>
<div class="abs" style="left:256px;top:512px;width:1637px;height:33px;background:#ffffff;border-bottom:1px solid #e3e3e3"></div>
<div class="abs" style="left:269px;top:520px;width:16px;height:16px;background:#fff;border:1px solid #8a8a8a;border-radius:4px"></div>
<div class="t" style="left:298px;top:518.30px;font-size:13px;color:#303030;font-weight:bold;letter-spacing:-0.6px">#1184</div>
<div class="t" style="left:464px;top:518.30px;font-size:13px;color:#303030;font-weight:normal;">17 oct. à 10:11</div>
<div class="abs" style="left:560px;top:522px;width:10px;height:10px;background:#c4c4c4"></div>
<div class="abs" style="left:570px;top:522px;width:10px;height:10px;background:#808080"></div>
<div class="abs" style="left:580px;top:522px;width:10px;height:10px;background:#5e5e5e"></div>
<div class="abs" style="left:590px;top:522px;width:10px;height:10px;background:#eeeeee"></div>
<div class="abs" style="left:600px;top:522px;width:10px;height:10px;background:#6a6a6a"></div>
<div class="t" style="left:685px;top:518.30px;font-size:13px;color:#303030;font-weight:normal;">Online Store</div>
<div class="t" style="left:520px;width:300px;text-align:right;top:518.30px;font-size:13px;color:#303030;font-weight:normal;">135,00 €</div>
<div class="abs" style="left:848px;top:518px;width:66px;height:20px;background:#ebebeb;border-radius:8px"></div>
<div class="abs" style="left:856px;top:524px;width:8px;height:8px;background:#4a4a4a;border-radius:50%"></div>
<div class="t" style="left:870px;top:518.30px;font-size:13px;color:#4a4a4a;font-weight:normal;">Payée</div>
<div class="abs" style="left:1005px;top:518px;width:87px;height:20px;background:#ffeb78;border-radius:8px"></div>
<div class="abs" style="left:1013px;top:524px;width:8px;height:8px;border:1.5px solid #4f4700;border-radius:50%"></div>
<div class="t" style="left:1027px;top:518.30px;font-size:13px;color:#4f4700;font-weight:normal;">Non traité</div>
<div class="t" style="left:1246px;top:518.30px;font-size:13px;color:#303030;font-weight:normal;">1 article</div>
<div class="t" style="left:1459px;top:518.30px;font-size:13px;color:#303030;font-weight:normal;">Colis privé</div>
<div class="abs" style="left:256px;top:545px;width:1637px;height:33px;background:#ffffff;border-bottom:1px solid #e3e3e3"></div>
<div class="abs" style="left:269px;top:553px;width:16px;height:16px;background:#fff;border:1px solid #8a8a8a;border-radius:4px"></div>
<div class="t" style="left:298px;top:551.30px;font-size:13px;color:#303030;font-weight:bold;letter-spacing:-0.6px">#1183</div>
<div class="t" style="left:464px;top:551.30px;font-size:13px;color:#303030;font-weight:normal;">4 oct. à 11:22</div>
<div class="abs" style="left:560px;top:552px;width:10px;height:10px;background:#e5e5e5"></div>
<div class="abs" style="left:580px;top:552px;width:10px;height:10px;background:#a0a0a0"></div>
<div class="t" style="left:520px;width:300px;text-align:right;top:551.30px;font-size:13px;color:#303030;font-weight:normal;">10,00 €</div>
<div class="abs" style="left:848px;top:551px;width:66px;height:20px;background:#ebebeb;border-radius:8px"></div>
<div class="abs" style="left:856px;top:557px;width:8px;height:8px;background:#4a4a4a;border-radius:50%"></div>
<div class="t" style="left:870px;top:551.30px;font-size:13px;color:#4a4a4a;font-weight:normal;">Payée</div>
<div class="abs" style="left:1005px;top:551px;width:87px;height:20px;background:#ffeb78;border-radius:8px"></div>
<div class="abs" style="left:1013px;top:557px;width:8px;height:8px;border:1.5px solid #4f4700;border-radius:50%"></div>
<div class="t" style="left:1027px;top:551.30px;font-size:13px;color:#4f4700;font-weight:normal;">Non traité</div>
<div class="t" style="left:1246px;top:551.30px;font-size:13px;color:#303030;font-weight:normal;">1 article</div>
<div class="t" style="left:1459px;top:551.30px;font-size:13px;color:#303030;font-weight:normal;">Expédition non requise</div>
<div class="abs" style="left:256px;top:578px;width:1637px;height:33px;background:#ffffff;border-bottom:1px solid #e3e3e3"></div>
<div class="abs" style="left:269px;top:586px;width:16px;height:16px;background:#fff;border:1px solid #8a8a8a;border-radius:4px"></div>
<div class="t" style="left:298px;top:584.30px;font-size:13px;color:#303030;font-weight:bold;letter-spacing:-0.6px">#1182</div>
<div class="t" style="left:464px;top:584.30px;font-size:13px;color:#303030;font-weight:normal;">4 oct. à 10:40</div>
<div class="abs" style="left:560px;top:592px;width:10px;height:10px;background:#e2e2e2"></div>
<div class="abs" style="left:570px;top:592px;width:10px;height:10px;background:#b5b5b5"></div>
<div class="abs" style="left:580px;top:592px;width:10px;height:10px;background:#7a7a7a"></div>
<div class="abs" style="left:600px;top:592px;width:10px;height:10px;background:#b5b5b5"></div>
<div class="t" style="left:520px;width:300px;text-align:right;top:584.30px;font-size:13px;color:#303030;font-weight:normal;">50,00 €</div>
<div class="abs" style="left:848px;top:584px;width:66px;height:20px;background:#ebebeb;border-radius:8px"></div>
<div class="abs" style="left:856px;top:590px;width:8px;height:8px;background:#4a4a4a;border-radius:50%"></div>
<div class="t" style="left:870px;top:584.30px;font-size:13px;color:#4a4a4a;font-weight:normal;">Payée</div>
<div class="abs" style="left:1005px;top:584px;width:87px;height:20px;background:#ffeb78;border-radius:8px"></div>
<div class="abs" style="left:1013px;top:590px;width:8px;height:8px;border:1.5px solid #4f4700;border-radius:50%"></div>
<div class="t" style="left:1027px;top:584.30px;font-size:13px;color:#4f4700;font-weight:normal;">Non traité</div>
<div class="t" style="left:1246px;top:584.30px;font-size:13px;color:#303030;font-weight:normal;">2 articles</div>
<div class="t" style="left:1459px;top:584.30px;font-size:13px;color:#303030;font-weight:normal;">Expédition non requise</div>
<div class="t" style="left:1596px;top:584.30px;font-size:13px;color:#616161;font-weight:normal;">+ 1</div>
<div class="abs" style="left:256px;top:611px;width:1637px;height:33px;background:#ffffff;border-bottom:1px solid #e3e3e3"></div>
<div class="abs" style="left:269px;top:619px;width:16px;height:16px;background:#fff;border:1px solid #8a8a8a;border-radius:4px"></div>
<div class="t" style="left:298px;top:617.30px;font-size:13px;color:#303030;font-weight:bold;letter-spacing:-0.6px">#1181</div>
<div class="t" style="left:464px;top:617.30px;font-size:13px;color:#303030;font-weight:normal;">4 oct. à 10:23</div>
<div class="abs" style="left:560px;top:622px;width:10px;height:10px;background:#dcdcdc"></div>
<div class="abs" style="left:570px;top:622px;width:10px;height:10px;background:#6a6a6a"></div>
<div class="abs" style="left:580px;top:622px;width:10px;height:10px;background:#777777"></div>
<div class="abs" style="left:600px;top:622px;width:10px;height:10px;background:#6a6a6a"></div>
<div class="t" style="left:520px;width:300px;text-align:right;top:617.30px;font-size:13px;color:#303030;font-weight:normal;">10,00 €</div>
<div class="abs" style="left:848px;top:617px;width:66px;height:20px;background:#ebebeb;border-radius:8px"></div>
<div class="abs" style="left:856px;top:623px;width:8px;height:8px;background:#4a4a4a;border-radius:50%"></div>
<div class="t" style="left:870px;top:617.30px;font-size:13px;color:#4a4a4a;font-weight:normal;">Payée</div>
<div class="abs" style="left:1005px;top:617px;width:87px;height:20px;background:#ffeb78;border-radius:8px"></div>
<div class="abs" style="left:1013px;top:623px;width:8px;height:8px;border:1.5px solid #4f4700;border-radius:50%"></div>
<div class="t" style="left:1027px;top:617.30px;font-size:13px;color:#4f4700;font-weight:normal;">Non traité</div>
<div class="t" style="left:1246px;top:617.30px;font-size:13px;color:#303030;font-weight:normal;">1 article</div>
<div class="t" style="left:1459px;top:617.30px;font-size:13px;color:#303030;font-weight:normal;">Expédition non requise</div>
<div class="abs" style="left:256px;top:644px;width:1637px;height:33px;background:#ffffff;border-bottom:1px solid #e3e3e3"></div>
<div class="abs" style="left:269px;top:652px;width:16px;height:16px;background:#fff;border:1px solid #8a8a8a;border-radius:4px"></div>
<div class="t" style="left:298px;top:650.30px;font-size:13px;color:#303030;font-weight:bold;letter-spacing:-0.6px">#1180</div>
<div class="t" style="left:464px;top:650.30px;font-size:13px;color:#303030;font-weight:normal;">4 oct. à 10:18</div>
<div class="abs" style="left:570px;top:652px;width:10px;height:10px;background:#cbcbcb"></div>
<div class="abs" style="left:580px;top:652px;width:10px;height:10px;background:#c2c2c2"></div>
<div class="abs" style="left:590px;top:652px;width:10px;height:10px;background:#d8d8d8"></div>
<div class="abs" style="left:610px;top:652px;width:10px;height:10px;background:#e0e0e0"></div>
<div class="abs" style="left:620px;top:652px;width:10px;height:10px;background:#e0e0e0"></div>
<div class="abs" style="left:630px;top:652px;width:10px;height:10px;background:#cacaca"></div>
<div class="t" style="left:520px;width:300px;text-align:right;top:650.30px;font-size:13px;color:#303030;font-weight:normal;">10,00 €</div>
<div class="abs" style="left:848px;top:650px;width:66px;height:20px;background:#ebebeb;border-radius:8px"></div>
<div class="abs" style="left:856px;top:656px;width:8px;height:8px;background:#4a4a4a;border-radius:50%"></div>
<div class="t" style="left:870px;top:650.30px;font-size:13px;color:#4a4a4a;font-weight:normal;">Payée</div>
<div class="abs" style="left:1005px;top:650px;width:87px;height:20px;background:#ffeb78;border-radius:8px"></div>
<div class="abs" style="left:1013px;top:656px;width:8px;height:8px;border:1.5px solid #4f4700;border-radius:50%"></div>
<div class="t" style="left:1027px;top:650.30px;font-size:13px;color:#4f4700;font-weight:normal;">Non traité</div>
<div class="t" style="left:1246px;top:650.30px;font-size:13px;color:#303030;font-weight:normal;">1 article</div>
<div class="t" style="left:1459px;top:650.30px;font-size:13px;color:#303030;font-weight:normal;">Expédition non requise</div>
<div class="abs" style="left:256px;top:677px;width:1637px;height:33px;background:#ffffff;border-bottom:1px solid #e3e3e3"></div>
<div class="abs" style="left:269px;top:685px;width:16px;height:16px;background:#fff;border:1px solid #8a8a8a;border-radius:4px"></div>
<div class="t" style="left:298px;top:683.30px;font-size:13px;color:#303030;font-weight:bold;letter-spacing:-0.6px">#1179</div>
<div class="t" style="left:464px;top:683.30px;font-size:13px;color:#303030;font-weight:normal;">5 sept. à 11:06</div>
<div class="abs" style="left:560px;top:692px;width:10px;height:10px;background:#a5a5a5"></div>
<div class="abs" style="left:570px;top:692px;width:10px;height:10px;background:#808080"></div>
<div class="abs" style="left:580px;top:692px;width:10px;height:10px;background:#a8a8a8"></div>
<div class="abs" style="left:590px;top:692px;width:10px;height:10px;background:#acacac"></div>
<div class="t" style="left:520px;width:300px;text-align:right;top:683.30px;font-size:13px;color:#303030;font-weight:normal;">11,75 €</div>
<div class="abs" style="left:848px;top:683px;width:66px;height:20px;background:#ebebeb;border-radius:8px"></div>
<div class="abs" style="left:856px;top:689px;width:8px;height:8px;background:#4a4a4a;border-radius:50%"></div>
<div class="t" style="left:870px;top:683.30px;font-size:13px;color:#4a4a4a;font-weight:normal;">Payée</div>
<div class="abs" style="left:1005px;top:683px;width:87px;height:20px;background:#ffeb78;border-radius:8px"></div>
<div class="abs" style="left:1013px;top:689px;width:8px;height:8px;border:1.5px solid #4f4700;border-radius:50%"></div>
<div class="t" style="left:1027px;top:683.30px;font-size:13px;color:#4f4700;font-weight:normal;">Non traité</div>
<div class="t" style="left:1246px;top:683.30px;font-size:13px;color:#303030;font-weight:normal;">1 article</div>
<div class="t" style="left:1459px;top:683.30px;font-size:13px;color:#303030;font-weight:normal;">Expédition</div>
<div class="abs" style="left:256px;top:710px;width:1637px;height:33px;background:#ffffff;border-bottom:1px solid #e3e3e3"></div>
<div class="abs" style="left:269px;top:718px;width:16px;height:16px;background:#fff;border:1px solid #8a8a8a;border-radius:4px"></div>
<div class="t" style="left:298px;top:716.30px;font-size:13px;color:#303030;font-weight:bold;letter-spacing:-0.6px">#1178</div>
<div class="t" style="left:464px;top:716.30px;font-size:13px;color:#303030;font-weight:normal;">29 août à 9:56</div>
<div class="abs" style="left:560px;top:722px;width:10px;height:10px;background:#dedede"></div>
<div class="abs" style="left:570px;top:722px;width:10px;height:10px;background:#727272"></div>
<div class="abs" style="left:580px;top:722px;width:10px;height:10px;background:#727272"></div>
<div class="abs" style="left:600px;top:722px;width:10px;height:10px;background:#8e8e8e"></div>
<div class="t" style="left:520px;width:300px;text-align:right;top:716.30px;font-size:13px;color:#303030;font-weight:normal;">130,00 €</div>
<div class="abs" style="left:848px;top:716px;width:66px;height:20px;background:#ebebeb;border-radius:8px"></div>
<div class="abs" style="left:856px;top:722px;width:8px;height:8px;background:#4a4a4a;border-radius:50%"></div>
<div class="t" style="left:870px;top:716.30px;font-size:13px;color:#4a4a4a;font-weight:normal;">Payée</div>
<div class="abs" style="left:1005px;top:716px;width:87px;height:20px;background:#ffeb78;border-radius:8px"></div>
<div class="abs" style="left:1013px;top:722px;width:8px;height:8px;border:1.5px solid #4f4700;border-radius:50%"></div>
<div class="t" style="left:1027px;top:716.30px;font-size:13px;color:#4f4700;font-weight:normal;">Non traité</div>
<div class="t" style="left:1246px;top:716.30px;font-size:13px;color:#303030;font-weight:normal;">1 article</div>
<div class="t" style="left:1459px;top:716.30px;font-size:13px;color:#303030;font-weight:normal;">Expédition</div>
<div class="abs" style="left:256px;top:743px;width:1637px;height:33px;background:#ffffff;border-bottom:1px solid #e3e3e3"></div>
<div class="abs" style="left:269px;top:751px;width:16px;height:16px;background:#fff;border:1px solid #8a8a8a;border-radius:4px"></div>
<div class="t" style="left:298px;top:749.30px;font-size:13px;color:#303030;font-weight:bold;letter-spacing:-0.6px">#1177</div>
<div class="t" style="left:464px;top:749.30px;font-size:13px;color:#303030;font-weight:normal;">17 juin à 13:38</div>
<div class="abs" style="left:560px;top:752px;width:10px;height:10px;background:#ececec"></div>
<div class="t" style="left:520px;width:300px;text-align:right;top:749.30px;font-size:13px;color:#303030;font-weight:normal;">130,00 €</div>
<div class="abs" style="left:848px;top:749px;width:66px;height:20px;background:#ebebeb;border-radius:8px"></div>
<div class="abs" style="left:856px;top:755px;width:8px;height:8px;background:#4a4a4a;border-radius:50%"></div>
<div class="t" style="left:870px;top:749.30px;font-size:13px;color:#4a4a4a;font-weight:normal;">Payée</div>
<div class="abs" style="left:1005px;top:749px;width:87px;height:20px;background:#ffeb78;border-radius:8px"></div>
<div class="abs" style="left:1013px;top:755px;width:8px;height:8px;border:1.5px solid #4f4700;border-radius:50%"></div>
<div class="t" style="left:1027px;top:749.30px;font-size:13px;color:#4f4700;font-weight:normal;">Non traité</div>
<div class="t" style="left:1246px;top:749.30px;font-size:13px;color:#303030;font-weight:normal;">1 article</div>
<div class="t" style="left:1459px;top:749.30px;font-size:13px;color:#303030;font-weight:normal;">Expédition</div>
<div class="abs" style="left:256px;top:776px;width:1637px;height:33px;background:#f7f7f7;border-bottom:1px solid #e3e3e3"></div>
<div class="abs" style="left:269px;top:784px;width:16px;height:16px;background:#fff;border:1px solid #8a8a8a;border-radius:4px"></div>
<div class="t" style="left:298px;top:782.30px;font-size:13px;color:#4a4a4a;font-weight:bold;letter-spacing:-0.6px">#1176</div>
<svg class="abs" style="left:396px;top:783.5px" width="12" height="15" viewBox="0 0 14 17" preserveAspectRatio="none"><path d="M7 1.2 C10.3 1.2 12.8 3.6 12.8 6.8 C12.8 10 10.3 12.6 7 15.8 C3.7 12.6 1.2 10 1.2 6.8 C1.2 3.6 3.7 1.2 7 1.2 Z" stroke="#ad760c" stroke-width="1.5" fill="none"/><line x1="7" y1="4.3" x2="7" y2="8.2" stroke="#ad760c" stroke-width="1.6" stroke-linecap="round"/><circle cx="7" cy="10.6" r="0.95" fill="#ad760c"/></svg>
<div class="t" style="left:464px;top:782.30px;font-size:13px;color:#616161;font-weight:normal;">25 févr. à 9:51</div>
<div class="t" style="left:520px;width:300px;text-align:right;top:782.30px;font-size:13px;color:#616161;font-weight:normal;">0,00 €</div>
<div class="abs" style="left:848px;top:782px;width:103px;height:20px;background:#e3e3e3;border-radius:8px"></div>
<div class="abs" style="left:856px;top:788px;width:8px;height:8px;background:#4a4a4a;border-radius:50%"></div>
<div class="t" style="left:870px;top:782.30px;font-size:13px;color:#4a4a4a;font-weight:normal;">Remboursée</div>
<div class="abs" style="left:1005px;top:782px;width:87px;height:20px;background:#ffeb78;border-radius:8px"></div>
<div class="abs" style="left:1013px;top:788px;width:8px;height:8px;border:1.5px solid #4f4700;border-radius:50%"></div>
<div class="t" style="left:1027px;top:782.30px;font-size:13px;color:#4f4700;font-weight:normal;">Non traité</div>
<div class="t" style="left:1246px;top:782.30px;font-size:13px;color:#616161;font-weight:normal;">0 article</div>
<div class="t" style="left:1459px;top:782.30px;font-size:13px;color:#616161;font-weight:normal;">Colis privé</div>
<div class="abs" style="left:1670px;top:783px;width:20px;height:10px;background:#a0a0a0"></div>
<div class="abs" style="left:1690px;top:783px;width:10px;height:10px;background:#8a8a8a"></div>
<div class="abs" style="left:1670px;top:793px;width:30px;height:10px;background:#dcdcdc"></div>
<div class="abs" style="left:256px;top:809px;width:1637px;height:33px;background:#ffffff;border-bottom:1px solid #e3e3e3"></div>
<div class="abs" style="left:269px;top:817px;width:16px;height:16px;background:#fff;border:1px solid #8a8a8a;border-radius:4px"></div>
<div class="t" style="left:298px;top:815.30px;font-size:13px;color:#303030;font-weight:bold;letter-spacing:-0.6px">#1175</div>
<svg class="abs" style="left:396px;top:816.5px" width="12" height="15" viewBox="0 0 14 17" preserveAspectRatio="none"><path d="M7 1.2 C10.3 1.2 12.8 3.6 12.8 6.8 C12.8 10 10.3 12.6 7 15.8 C3.7 12.6 1.2 10 1.2 6.8 C1.2 3.6 3.7 1.2 7 1.2 Z" stroke="#ad760c" stroke-width="1.5" fill="none"/><line x1="7" y1="4.3" x2="7" y2="8.2" stroke="#ad760c" stroke-width="1.6" stroke-linecap="round"/><circle cx="7" cy="10.6" r="0.95" fill="#ad760c"/></svg>
<div class="t" style="left:464px;top:815.30px;font-size:13px;color:#303030;font-weight:normal;">25 févr. à 9:50</div>
<div class="t" style="left:520px;width:300px;text-align:right;top:815.30px;font-size:13px;color:#303030;font-weight:normal;">130,00 €</div>
<div class="abs" style="left:848px;top:815px;width:66px;height:20px;background:#ebebeb;border-radius:8px"></div>
<div class="abs" style="left:856px;top:821px;width:8px;height:8px;background:#4a4a4a;border-radius:50%"></div>
<div class="t" style="left:870px;top:815.30px;font-size:13px;color:#4a4a4a;font-weight:normal;">Payée</div>
<div class="abs" style="left:1005px;top:815px;width:88px;height:20px;background:#ffd6a4;border-radius:8px"></div>
<div class="abs" style="left:1013px;top:821px;width:8px;height:8px;border:1.5px solid #5e4200;border-radius:50%"></div>
<div class="t" style="left:1027px;top:815.30px;font-size:13px;color:#5e4200;font-weight:normal;">Suspendu</div>
<div class="t" style="left:1246px;top:815.30px;font-size:13px;color:#303030;font-weight:normal;">1 article</div>
<div class="t" style="left:1459px;top:815.30px;font-size:13px;color:#303030;font-weight:normal;">Expédition</div>
<div class="abs" style="left:256px;top:842px;width:1637px;height:33px;background:#f7f7f7;border-bottom:1px solid #e3e3e3"></div>
<div class="abs" style="left:269px;top:850px;width:16px;height:16px;background:#fff;border:1px solid #8a8a8a;border-radius:4px"></div>
<div class="t" style="left:298px;top:848.30px;font-size:13px;color:#4a4a4a;font-weight:bold;letter-spacing:-0.6px">#1174</div>
<svg class="abs" style="left:396px;top:849.5px" width="12" height="15" viewBox="0 0 14 17" preserveAspectRatio="none"><path d="M7 1.2 C10.3 1.2 12.8 3.6 12.8 6.8 C12.8 10 10.3 12.6 7 15.8 C3.7 12.6 1.2 10 1.2 6.8 C1.2 3.6 3.7 1.2 7 1.2 Z" stroke="#ad760c" stroke-width="1.5" fill="none"/><line x1="7" y1="4.3" x2="7" y2="8.2" stroke="#ad760c" stroke-width="1.6" stroke-linecap="round"/><circle cx="7" cy="10.6" r="0.95" fill="#ad760c"/></svg>
<div class="t" style="left:464px;top:848.30px;font-size:13px;color:#616161;font-weight:normal;">25 févr. à 9:42</div>
<div class="t" style="left:520px;width:300px;text-align:right;top:848.30px;font-size:13px;color:#616161;font-weight:normal;">135,00 €</div>
<div class="abs" style="left:848px;top:848px;width:66px;height:20px;background:#e3e3e3;border-radius:8px"></div>
<div class="abs" style="left:856px;top:854px;width:8px;height:8px;background:#4a4a4a;border-radius:50%"></div>
<div class="t" style="left:870px;top:848.30px;font-size:13px;color:#4a4a4a;font-weight:normal;">Payée</div>
<div class="abs" style="left:1005px;top:848px;width:63px;height:20px;background:#ebebeb;border-radius:8px"></div>
<div class="abs" style="left:1013px;top:854px;width:8px;height:8px;background:#4a4a4a;border-radius:50%"></div>
<div class="t" style="left:1027px;top:848.30px;font-size:13px;color:#4a4a4a;font-weight:normal;">Traité</div>
<div class="t" style="left:1246px;top:848.30px;font-size:13px;color:#616161;font-weight:normal;">1 article</div>
<div class="abs" style="left:1330px;top:848px;width:66px;height:20px;background:#e3e3e3;border-radius:8px"></div>
<div class="abs" style="left:1338px;top:854px;width:8px;height:8px;background:#4a4a4a;border-radius:50%"></div>
<div class="t" style="left:1352px;top:848.30px;font-size:13px;color:#4a4a4a;font-weight:normal;">Livrée</div>
<div class="t" style="left:1459px;top:848.30px;font-size:13px;color:#616161;font-weight:normal;">Colis privé</div>
<div class="abs" style="left:256px;top:875px;width:1637px;height:30px;background:#f7f7f7;border-bottom:1px solid #e3e3e3"></div>
<div class="abs" style="left:269px;top:883px;width:16px;height:16px;background:#fff;border:1px solid #8a8a8a;border-radius:4px"></div>
<div class="t" style="left:298px;top:881.30px;font-size:13px;color:#4a4a4a;font-weight:bold;letter-spacing:-0.6px">#1173</div>
<div class="t" style="left:464px;top:881.30px;font-size:13px;color:#616161;font-weight:normal;">20 févr. à 11:02</div>
<div class="abs" style="left:621px;top:881px;width:10px;height:10px;background:#8a8a8a"></div>
<div class="t" style="left:520px;width:300px;text-align:right;top:881.30px;font-size:13px;color:#616161;font-weight:normal;">520,00 €</div>
<div class="abs" style="left:848px;top:881px;width:66px;height:20px;background:#e3e3e3;border-radius:8px"></div>
<div class="abs" style="left:856px;top:887px;width:8px;height:8px;background:#4a4a4a;border-radius:50%"></div>
<div class="t" style="left:870px;top:881.30px;font-size:13px;color:#4a4a4a;font-weight:normal;">Payée</div>
<div class="abs" style="left:1005px;top:881px;width:63px;height:20px;background:#ebebeb;border-radius:8px"></div>
<div class="abs" style="left:1013px;top:887px;width:8px;height:8px;background:#4a4a4a;border-radius:50%"></div>
<div class="t" style="left:1027px;top:881.30px;font-size:13px;color:#4a4a4a;font-weight:normal;">Traité</div>
<div class="t" style="left:1246px;top:881.30px;font-size:13px;color:#616161;font-weight:normal;">4 articles</div>
<div class="abs" style="left:1330px;top:881px;width:83px;height:20px;background:#e3e3e3;border-radius:8px"></div>
<div class="t" style="left:1338px;top:881.30px;font-size:13px;color:#4a4a4a;font-weight:normal;">Suivi ajouté</div>
<div class="t" style="left:1459px;top:881.30px;font-size:13px;color:#616161;font-weight:normal;">Expédition</div>
<div class="abs" style="left:256px;top:905px;width:1637px;height:12px;background:#fff"></div>
<div class="abs" style="left:260px;top:907.3px;width:1550px;height:7.7px;background:#c1c1c1;border-radius:4px"></div>
<div class="abs" style="left:256px;top:917px;width:1637px;height:1px;background:#e3e3e3"></div>
<div class="abs" style="left:268px;top:926px;width:56px;height:27px;background:#e3e3e3;border-radius:8px"></div>
<div class="abs" style="left:296px;top:926px;width:1px;height:27px;background:#f7f7f7"></div>
<svg class="abs" style="left:277px;top:934px" width="10" height="12" viewBox="0 0 10 12"><path d="M6.5 2 L3 6 L6.5 10" stroke="#b5b5b5" stroke-width="1.4" fill="none" stroke-linecap="round" stroke-linejoin="round"/></svg>
<svg class="abs" style="left:305px;top:934px" width="10" height="12" viewBox="0 0 10 12"><path d="M3.5 2 L7 6 L3.5 10" stroke="#303030" stroke-width="1.5" fill="none" stroke-linecap="round" stroke-linejoin="round"/></svg>
<div class="t" style="left:332.8px;top:929.10px;font-size:13px;color:#303030;font-weight:normal;">1-50</div>
<div class="abs" style="left:1912px;top:59.5px;width:6px;height:397.5px;background:#808080;border-radius:3px"></div>
<div class="abs" style="left:175px;top:276px;width:298px;height:500px;background:#fff;border-radius:12px;box-shadow:0 6px 10px -2px rgba(26,26,26,0.28),0 0 0 1px rgba(0,0,0,0.07),0 1px 3px rgba(0,0,0,0.12)"></div>
<div class="abs" style="left:183px;top:284px;width:272px;height:32px;background:#fdfdfd;border:1px solid #8a8a8a;border-radius:8px"></div>
<svg class="abs" style="left:194px;top:292px" width="14" height="15" viewBox="0 0 14 15"><circle cx="6" cy="6.5" r="4.6" stroke="#616161" stroke-width="1.5" fill="none"/><line x1="9.4" y1="9.9" x2="12.6" y2="13.1" stroke="#616161" stroke-width="1.6" stroke-linecap="round"/></svg>
<div class="t" style="left:215px;top:290.15px;font-size:14px;color:#616161;font-weight:normal;">Rechercher</div>
<div class="t" style="left:187.5px;top:329.20px;font-size:13.85px;color:#303030;font-weight:normal;letter-spacing:-0.05px">Statut de la commande</div>
<div class="t" style="left:187.5px;top:363.20px;font-size:13.85px;color:#303030;font-weight:normal;letter-spacing:-0.05px">Statut du paiement</div>
<div class="t" style="left:187.5px;top:397.20px;font-size:13.85px;color:#303030;font-weight:normal;letter-spacing:-0.05px">Statut du traitement de la commande</div>
<div class="t" style="left:187.5px;top:431.20px;font-size:13.85px;color:#303030;font-weight:normal;letter-spacing:-0.05px">Statut de la livraison</div>
<div class="t" style="left:187.5px;top:465.20px;font-size:13.85px;color:#303030;font-weight:normal;letter-spacing:-0.05px">Statut du retour</div>
<div class="t" style="left:187.5px;top:499.20px;font-size:13.85px;color:#303030;font-weight:normal;letter-spacing:-0.05px">Statut de l’étiquette</div>
<div class="t" style="left:187.5px;top:533.20px;font-size:13.85px;color:#303030;font-weight:normal;letter-spacing:-0.05px">Statut de la rétrofacturation et de l’enquête</div>
<div class="t" style="left:187.5px;top:567.20px;font-size:13.85px;color:#303030;font-weight:normal;letter-spacing:-0.05px">Total de la commande</div>
<div class="t" style="left:187.5px;top:601.20px;font-size:13.85px;color:#303030;font-weight:normal;letter-spacing:-0.05px">Mode de livraison</div>
<div class="t" style="left:187.5px;top:635.20px;font-size:13.85px;color:#303030;font-weight:normal;letter-spacing:-0.05px">Destination</div>
<div class="t" style="left:187.5px;top:669.20px;font-size:13.85px;color:#303030;font-weight:normal;letter-spacing:-0.05px">Validation d’adresse</div>
<div class="t" style="left:187.5px;top:703.20px;font-size:13.85px;color:#303030;font-weight:normal;letter-spacing:-0.05px">Nombre d’articles</div>
<div class="t" style="left:187.5px;top:737.20px;font-size:13.85px;color:#303030;font-weight:normal;letter-spacing:-0.05px">Poids total du produit</div>
<div class="abs" style="left:175px;top:756px;width:288px;height:20px;background:linear-gradient(rgba(0,0,0,0),rgba(0,0,0,0.035));border-radius:0 0 0 12px"></div>
<div class="abs" style="left:466px;top:280px;width:6px;height:283px;background:#8a8a8a;border-radius:3px"></div>
<div class="abs" style="left:253px;top:238px;width:141px;height:42px;border:3.5px solid #ff0a14;border-radius:6px"></div>
<div class="abs" style="left:178px;top:389px;width:247px;height:36px;border:3.5px solid #ff0a14;border-radius:6px"></div>
<svg class="abs" style="left:100px;top:240px" width="150" height="30" viewBox="100 240 150 30"><path d="M108 256 L216 254.2 L216 258.8 L108 259.2 Z" fill="#ff0a14"/><path d="M215 246 L244 255.5 L215 266.5 Z" fill="#ff0a14"/></svg>
<svg class="abs" style="left:425px;top:390px" width="160" height="30" viewBox="425 390 160 30"><path d="M575 403.5 L458 403.8 L458 407.5 L575 406.8 Z" fill="#ff0a14"/><path d="M460 396 L432 405.5 L460 415.5 Z" fill="#ff0a14"/></svg>
</div>
</body></html>
